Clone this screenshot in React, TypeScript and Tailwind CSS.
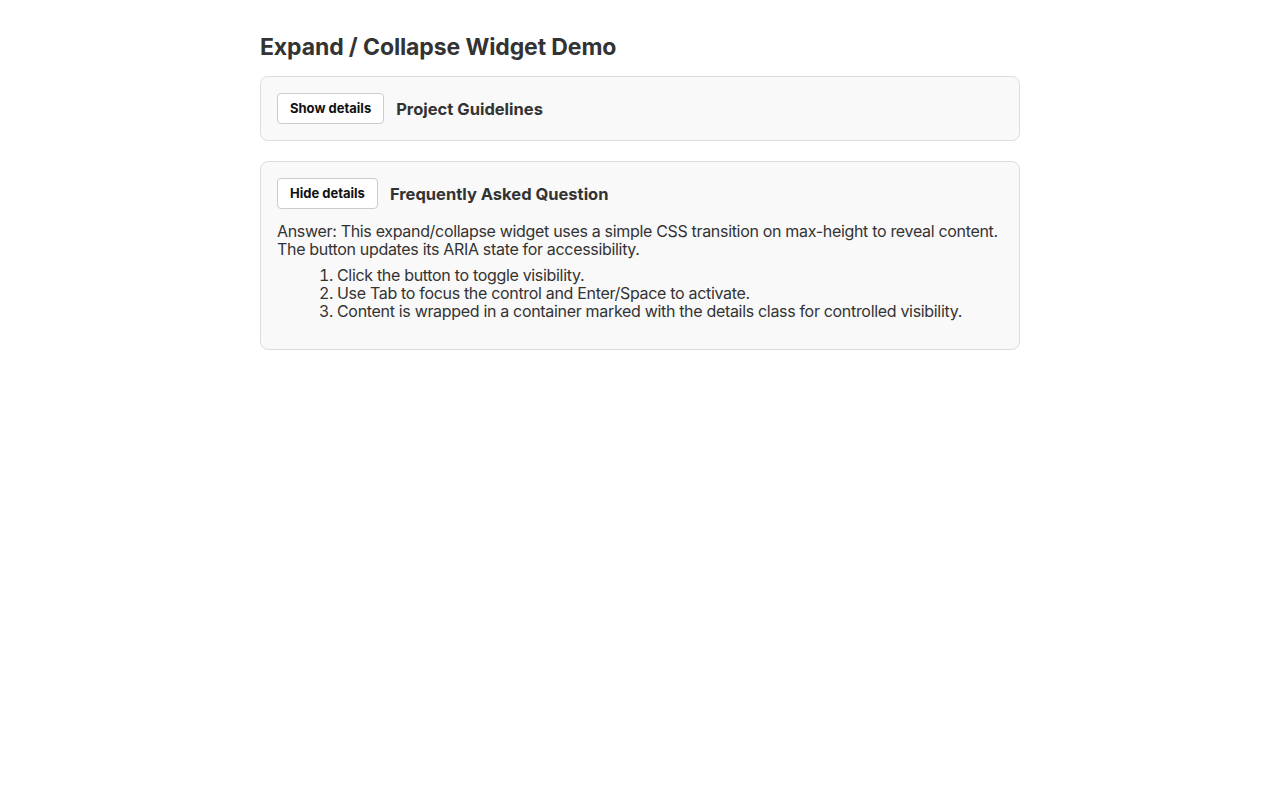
import { useState } from "react";

interface ItemProps {
  title: string;
  defaultOpen?: boolean;
  children: React.ReactNode;
}

function Collapsible({ title, defaultOpen = false, children }: ItemProps) {
  const [open, setOpen] = useState(defaultOpen);
  return (
    <section className="rounded-lg border border-[#dddddd] bg-[#f9f9f9] p-4">
      <div className="flex items-center gap-3">
        <button
          onClick={() => setOpen(!open)}
          aria-expanded={open}
          className="rounded border border-[#cccccc] bg-white px-3 py-[7px] text-[13px] leading-[15px] font-bold text-[#111]"
        >
          {open ? "Hide details" : "Show details"}
        </button>
        <h2 className="pt-[2px] text-[16.5px] font-bold text-[#333]">{title}</h2>
      </div>
      {open && (
        <div className="details mt-[13px] mb-[13px] leading-[18px] tracking-[-0.02em]">{children}</div>
      )}
    </section>
  );
}

export default function App() {
  return (
    <div className="min-h-screen bg-white font-['Inter','Liberation_Sans',sans-serif] text-[16px] text-[#333]">
      <main className="mx-auto w-[760px] pt-[32px]">
        <h1 className="mb-[14px] text-[23px] leading-[30px] font-bold tracking-[-0.005em] text-[#333]">
          Expand / Collapse Widget Demo
        </h1>
        <div className="flex flex-col gap-5">
          <Collapsible title="Project Guidelines">
            <p>Guidelines for contributing to the project.</p>
          </Collapsible>
          <Collapsible title="Frequently Asked Question" defaultOpen>
            <p>
              Answer: This expand/collapse widget uses a simple CSS transition on max-height to
              reveal content. The button updates its ARIA state for accessibility.
            </p>
            <ol className="mt-2 list-decimal pl-[60px]">
              <li>Click the button to toggle visibility.</li>
              <li>Use Tab to focus the control and Enter/Space to activate.</li>
              <li>Content is wrapped in a container marked with the details class for controlled visibility.</li>
            </ol>
          </Collapsible>
        </div>
      </main>
    </div>
  );
}
